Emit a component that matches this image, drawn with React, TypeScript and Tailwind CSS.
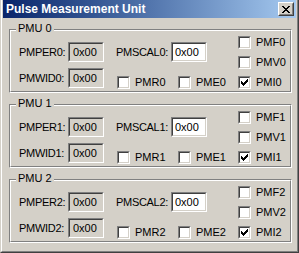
import type { ReactNode } from "react";

type Unit = { n: number; checked: string[] };

const UNITS: Unit[] = [
  { n: 0, checked: ["PMI0"] },
  { n: 1, checked: ["PMI1"] },
  { n: 2, checked: ["PMI2"] },
];

// classic tick, 7x7 pixels
const TICK: [number, number, number][] = [
  [6, 0, 1],
  [5, 1, 2],
  [0, 2, 1],
  [4, 2, 3],
  [0, 3, 2],
  [3, 3, 3],
  [0, 4, 5],
  [1, 5, 3],
  [2, 6, 1],
];

function Field({ value, editable }: { value: string; editable?: boolean }) {
  return (
    <div className="h-[20px] w-[36px] border border-t-[#808080] border-l-[#808080] border-b-white border-r-white">
      <div
        className={`flex h-full w-full items-center border border-t-[#404040] border-l-[#404040] border-b-[#d4d0c8] border-r-[#d4d0c8] ${
          editable ? "bg-white pl-[2px]" : "bg-[#d4d0c8] pl-[3px]"
        }`}
      >
        {value}
      </div>
    </div>
  );
}

function Check({ label, checked }: { label: string; checked?: boolean }) {
  return (
    <div className="flex h-[13px] items-center">
      <div className="size-[13px] shrink-0 border border-t-[#808080] border-l-[#808080] border-b-white border-r-white bg-white">
        <div className="size-full border border-t-[#404040] border-l-[#404040] border-b-[#d4d0c8] border-r-[#d4d0c8] p-px">
          {checked && (
            <svg width="7" height="7" viewBox="0 0 7 7" shapeRendering="crispEdges">
              {TICK.map(([x, y, w]) => (
                <rect key={`${x}-${y}`} x={x} y={y} width={w} height={1} fill="#000" />
              ))}
            </svg>
          )}
        </div>
      </div>
      <span className="ml-[5px] whitespace-nowrap">{label}</span>
    </div>
  );
}

function GroupBox({ title, children }: { title: string; children: ReactNode }) {
  return (
    <div className="relative h-[64px] border border-t-[#808080] border-l-[#808080] border-b-white border-r-white">
      <div className="h-full border border-t-white border-l-white border-b-[#808080] border-r-[#808080]">
        {children}
      </div>
      <span className="absolute left-[6px] top-[-8px] bg-[#d4d0c8] px-[2px] leading-[13px]">{title}</span>
    </div>
  );
}

function PmuGroup({ unit }: { unit: Unit }) {
  const n = unit.n;
  const on = (name: string) => unit.checked.includes(name);
  return (
    <GroupBox title={`PMU ${n}`}>
      <div className="flex pl-[8px]">
        <div className="flex flex-col gap-[6px] pt-[11px]">
          <div className="flex h-[20px] items-center">
            <span className="w-[49px] tracking-[-0.3px]">PMPER{n}:</span>
            <Field value="0x00" />
          </div>
          <div className="flex h-[20px] items-center">
            <span className="w-[49px] tracking-[-0.3px]">PMWID{n}:</span>
            <Field value="0x00" />
          </div>
        </div>

        <div className="ml-[12px] flex w-[122px] flex-col pt-[11px]">
          <div className="flex h-[20px] items-center">
            <span className="w-[55px] whitespace-nowrap tracking-[-0.3px]">PMSCAL{n}:</span>
            <Field value="0x00" editable />
          </div>
          <div className="ml-px mt-[14px] flex">
            <div className="w-[61px]">
              <Check label={`PMR${n}`} checked={on(`PMR${n}`)} />
            </div>
            <Check label={`PME${n}`} checked={on(`PME${n}`)} />
          </div>
        </div>

        <div className="flex flex-col gap-[7px] pt-[5px]">
          <Check label={`PMF${n}`} checked={on(`PMF${n}`)} />
          <Check label={`PMV${n}`} checked={on(`PMV${n}`)} />
          <Check label={`PMI${n}`} checked={on(`PMI${n}`)} />
        </div>
      </div>
    </GroupBox>
  );
}

export default function App() {
  return (
    <div className="h-[253px] w-[299px] border border-t-0 border-l-[#d4d0c8] border-r-[#404040] border-b-[#404040] bg-[#d4d0c8] font-['Liberation_Sans',Arial,sans-serif] text-[11px] leading-[13px] text-black">
      <div className="h-full border border-t-0 border-l-white border-r-[#808080] border-b-[#808080] px-px pb-px">
        <div className="flex h-[18px] items-center bg-gradient-to-r from-[#0a246a] to-[#a6caf0] pl-[3px] pr-[2px]">
          <span className="text-[12px] font-bold text-white">Pulse Measurement Unit</span>
          <button className="ml-auto flex h-[14px] w-[16px] items-center justify-center border border-t-white border-l-white border-r-[#404040] border-b-[#404040] bg-[#d4d0c8]">
            <span className="flex size-full items-center justify-center border border-t-[#d4d0c8] border-l-[#d4d0c8] border-r-[#808080] border-b-[#808080]">
              <svg width="8" height="7" viewBox="0 0 8 7" shapeRendering="crispEdges">
                <path d="M0 0h2v1h-2zM6 0h2v1h-2zM1 1h2v1h-2zM5 1h2v1h-2zM2 2h4v1h-4zM3 3h2v1h-2zM2 4h4v1h-4zM1 5h2v1h-2zM5 5h2v1h-2zM0 6h2v1h-2zM6 6h2v1h-2z" fill="#000" />
              </svg>
            </span>
          </button>
        </div>
        <div className="flex flex-col gap-[11px] pl-[6px] pr-[4px] pt-[11px]">
          {UNITS.map((u) => (
            <PmuGroup key={u.n} unit={u} />
          ))}
        </div>
      </div>
    </div>
  );
}
